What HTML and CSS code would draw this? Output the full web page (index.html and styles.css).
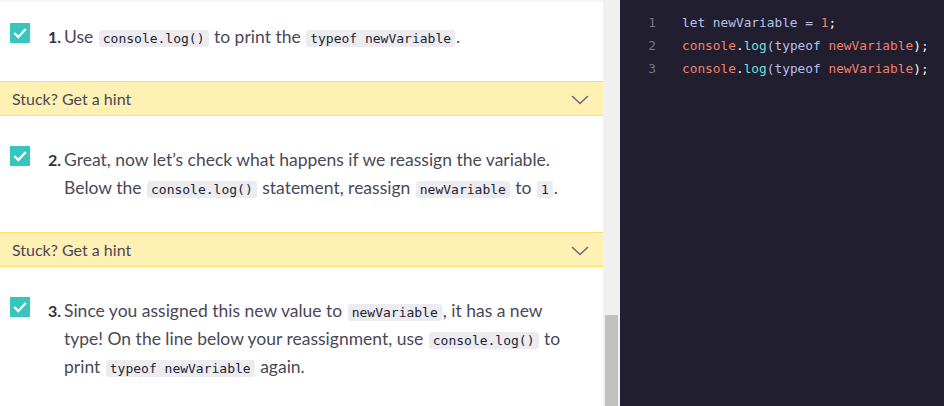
FILE: index.html
```html
<!DOCTYPE html>
<html>
<head>
<meta charset="utf-8">
<link rel="stylesheet" href="styles.css">
</head>
<body>
<div class="app">
  <div class="instructions">
    <div class="topstrip"></div>
    <div class="step first">
      <span class="check"><svg width="20" height="20" viewBox="0 0 20 20"><path d="M4.3 10 L8.3 14 L15.8 6" fill="none" stroke="#fff" stroke-width="2.4"/></svg></span>
      <span class="num">1.</span>
      <p class="text">Use <code>console.log()</code> to print the <code>typeof newVariable</code>.</p>
    </div>
    <div class="hint"><span>Stuck? Get a hint</span><svg width="20" height="12" viewBox="0 0 20 12"><path d="M2 2 L10 9.5 L18 2" fill="none" stroke="#6b6977" stroke-width="1.6"/></svg></div>
    <div class="step">
      <span class="check"><svg width="20" height="20" viewBox="0 0 20 20"><path d="M4.3 10 L8.3 14 L15.8 6" fill="none" stroke="#fff" stroke-width="2.4"/></svg></span>
      <span class="num">2.</span>
      <p class="text">Great, now let’s check what happens if we reassign the variable. Below the <code>console.log()</code> statement, reassign <code>newVariable</code> to <code>1</code>.</p>
    </div>
    <div class="hint"><span>Stuck? Get a hint</span><svg width="20" height="12" viewBox="0 0 20 12"><path d="M2 2 L10 9.5 L18 2" fill="none" stroke="#6b6977" stroke-width="1.6"/></svg></div>
    <div class="step">
      <span class="check"><svg width="20" height="20" viewBox="0 0 20 20"><path d="M4.3 10 L8.3 14 L15.8 6" fill="none" stroke="#fff" stroke-width="2.4"/></svg></span>
      <span class="num">3.</span>
      <p class="text">Since you assigned this new value to <code>newVariable</code>, it has a new type! On the line below your reassignment, use <code>console.log()</code> to print <code>typeof newVariable</code> again.</p>
    </div>
  </div>
  <div class="scrollbar"><div class="thumb"></div></div>
  <div class="editor">
    <div class="line"><span class="ln">1</span><span class="code"><span class="p">let newVariable = </span><span class="r">1</span><span class="w">;</span></span></div>
    <div class="line"><span class="ln">2</span><span class="code"><span class="r">console</span><span class="w">.</span><span class="t">log</span><span class="p">(typeof </span><span class="r">newVariable</span><span class="w">);</span></span></div>
    <div class="line"><span class="ln">3</span><span class="code"><span class="r">console</span><span class="w">.</span><span class="t">log</span><span class="p">(typeof </span><span class="r">newVariable</span><span class="w">);</span></span></div>
  </div>
</div>
</body>
</html>
```

FILE: styles.css
```css
* { box-sizing: border-box; }
html, body { margin: 0; padding: 0; }
body { width: 944px; height: 406px; overflow: hidden; background: #fff; }
.app { display: flex; height: 406px; }
.instructions { width: 603px; background: #fff; overflow: hidden; font-family: Lato, "Noto Sans", sans-serif; color: #4a4858; }
.topstrip { height: 2px; background: #f5f5f7; }
.step { display: flex; align-items: flex-start; padding: 30px 20px 30px 10px; }
.step.first { padding-top: 21px; }
.check { flex: 0 0 20px; width: 20px; height: 20px; background: #37c5bd; display: flex; }
.num { flex: 0 0 auto; width: 16px; margin-left: 18px; font-size: 16px; font-weight: 700; line-height: 28px; color: #33313f; }
.text { margin: 0; font-size: 17.5px; line-height: 28px; max-width: 510px; }
code { display: inline-block; font-family: "DejaVu Sans Mono", monospace; font-size: 13px; line-height: 17px; background: #ebebf0; color: #221f30; border-radius: 3px; padding: 0 4px; margin: 0 1px; vertical-align: baseline; }
.hint { display: flex; justify-content: space-between; align-items: center; height: 35px; background: #fff0b3; border-top: 1px solid #ffe066; border-bottom: 1px solid #ffe066; padding: 0 13px 0 12px; font-size: 16px; color: #4a4858; }
.hint svg { margin-top: 2px; }
.scrollbar { width: 17px; background: #f0f0f0; position: relative; }
.thumb { position: absolute; left: 2px; right: 2px; top: 315px; bottom: 0; background: #c1c1c1; }
.editor { flex: 1; background: #211e2f; padding-top: 11px; font-family: "DejaVu Sans Mono", monospace; font-size: 12.8px; }
.line { display: flex; height: 23px; line-height: 23px; }
.ln { width: 36px; text-align: right; color: #77748a; }
.code { margin-left: 26px; white-space: pre; }
.p { color: #b7c0ec; }
.r { color: #f2806c; }
.t { color: #6fe3d8; }
.w { color: #f4f4f8; }
```
